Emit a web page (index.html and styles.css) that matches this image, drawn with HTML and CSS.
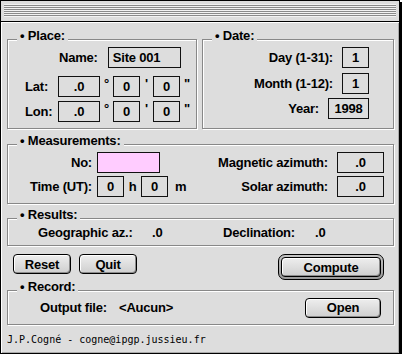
FILE: index.html
```html
<!DOCTYPE html>
<html lang="en">
<head>
  <meta charset="UTF-8">
  <title>Declination</title>
  <link rel="stylesheet" href="styles.css">
</head>
<body>
  <div class="window">
    <div class="titlebar"><div class="stripes"></div></div>

    <div class="content">
      <div class="top-row">
        <div class="group place">
          <span class="group-title">• Place:</span>
          <div class="name-row">
            <span>Name:</span>
            <span class="field name-field">Site 001</span>
          </div>
          <div class="coord-row lat">
            <span class="coord-label">Lat:</span>
            <span class="field deg">.0</span><span class="unit">°</span>
            <span class="field min">0</span><span class="unit">'</span>
            <span class="field sec">0</span><span class="unit last">"</span>
          </div>
          <div class="coord-row">
            <span class="coord-label">Lon:</span>
            <span class="field deg">.0</span><span class="unit">°</span>
            <span class="field min">0</span><span class="unit">'</span>
            <span class="field sec">0</span><span class="unit last">"</span>
          </div>
        </div>

        <div class="group date">
          <span class="group-title">• Date:</span>
          <div class="date-row day">
            <span>Day (1-31):</span>
            <span class="field small">1</span>
          </div>
          <div class="date-row">
            <span>Month (1-12):</span>
            <span class="field small">1</span>
          </div>
          <div class="date-row">
            <span>Year:</span>
            <span class="field year">1998</span>
          </div>
        </div>
      </div>

      <div class="group measurements">
        <span class="group-title">• Measurements:</span>
        <div class="meas-left">
          <span class="meas-label">No:</span>
          <span class="field pink"></span>
          <span class="meas-label">Time (UT):</span>
          <div class="time">
            <span class="field small">0</span><span class="unit-h">h</span>
            <span class="field small">0</span><span class="unit-m">m</span>
          </div>
        </div>
        <div class="meas-right">
          <span class="meas-label">Magnetic azimuth:</span>
          <span class="field azimuth">.0</span>
          <span class="meas-label">Solar azimuth:</span>
          <span class="field azimuth">.0</span>
        </div>
      </div>

      <div class="group results">
        <span class="group-title">• Results:</span>
        <span>Geographic az.:</span>
        <span>.0</span>
        <span>Declination:</span>
        <span>.0</span>
      </div>

      <div class="button-row">
        <button class="btn">Reset</button>
        <button class="btn quit">Quit</button>
        <div class="default-ring">
          <button class="btn compute">Compute</button>
        </div>
      </div>

      <div class="group record">
        <span class="group-title">• Record:</span>
        <span class="output-label">Output file:</span>
        <span>&lt;Aucun&gt;</span>
        <button class="btn open">Open</button>
      </div>

      <div class="footer">J.P.Cogné - cogne@ipgp.jussieu.fr</div>
    </div>
  </div>
</body>
</html>
```

FILE: styles.css
```css
:root {
  --bg: #dddddd;
  --etch-dark: #888888;
  --etch-light: #ffffff;
  --field-border: #111111;
  --pink: #ffccff;
}

body {
  margin: 0;
  background: #ffffff;
}

.window {
  width: 400px;
  height: 354px;
  box-sizing: border-box;
  border: 1px solid #000;
  box-shadow: 2px 2px 0 #000;
  background: var(--bg);
  display: flex;
  flex-direction: column;
  font-family: "Liberation Sans", Arial, sans-serif;
  font-weight: bold;
  font-size: 13px;
  line-height: 15px;
  letter-spacing: -0.2px;
  color: #000;
}

/* title bar */
.titlebar {
  height: 21px;
  box-sizing: border-box;
  border-bottom: 1px solid #000;
  padding: 3px 3px 0 3px;
  background: var(--bg);
}

.stripes {
  height: 13px;
  background: repeating-linear-gradient(to bottom, #f2f2f2 0 1px, #8a8a8a 1px 2px);
}

.content {
  flex: 1;
  display: flex;
  flex-direction: column;
  padding: 0 5px 0 6px;
  box-shadow: inset 1px 1px 0 #fff, inset -1px -1px 0 #aaa;
}

/* group boxes */
.group {
  position: relative;
  box-sizing: border-box;
  border: 1px solid var(--etch-dark);
  box-shadow: inset 1px 1px 0 var(--etch-light), 1px 1px 0 var(--etch-light);
}

.group-title {
  position: absolute;
  top: -12px;
  left: 9px;
  padding: 0 3px;
  background: var(--bg);
  white-space: nowrap;
}

.field {
  display: flex;
  align-items: center;
  justify-content: center;
  box-sizing: border-box;
  height: 21px;
  border: 1px solid var(--field-border);
}

/* place / date */
.top-row {
  display: flex;
  gap: 5px;
  margin-top: 17px;
  height: 90px;
}

.place {
  width: 190px;
  padding: 7px 0 0 17px;
}

.name-row {
  display: flex;
  align-items: center;
  gap: 10px;
  padding-left: 34px;
  margin-bottom: 8px;
}

.name-field {
  width: 73px;
  justify-content: flex-start;
  padding-left: 4px;
}

.coord-row {
  display: flex;
  align-items: center;
}

.coord-row.lat {
  margin-bottom: 4px;
}

.coord-label {
  width: 33px;
}

.deg {
  width: 42px;
}

.min,
.sec {
  width: 27px;
}

.unit {
  width: 13px;
  text-align: center;
  align-self: flex-start;
}

.unit.last {
  width: auto;
  margin-left: 4px;
}

.date {
  flex: 1;
  padding: 7px 24px 0 0;
  display: flex;
  flex-direction: column;
  align-items: flex-end;
  gap: 4px;
}

.date-row {
  display: flex;
  align-items: center;
  gap: 9px;
}

.date-row.day {
  margin-bottom: 1px;
}

.small {
  width: 27px;
}

.year {
  width: 41px;
}

/* measurements */
.measurements {
  height: 60px;
  margin-top: 15px;
  padding: 7px 9px 0 0;
  display: flex;
  justify-content: space-between;
  align-items: flex-start;
}

.meas-left,
.meas-right {
  display: grid;
  align-items: center;
  row-gap: 3px;
}

.meas-left {
  grid-template-columns: 84px auto;
  column-gap: 5px;
}

.meas-right {
  grid-template-columns: auto 47px;
  column-gap: 9px;
}

.meas-label {
  justify-self: end;
  white-space: nowrap;
}

.pink {
  width: 63px;
  background: var(--pink);
}

.time {
  display: flex;
  align-items: center;
}

.unit-h {
  width: 17px;
  text-align: center;
}

.unit-m {
  margin-left: 7px;
}

/* results */
.results {
  height: 28px;
  margin-top: 14px;
  padding-left: 30px;
  display: grid;
  grid-template-columns: 114px 71px 92px auto;
  align-items: center;
}

/* buttons */
.button-row {
  display: flex;
  align-items: flex-start;
  height: 26px;
  margin-top: 8px;
  padding: 0 10px 0 6px;
}

.btn {
  display: flex;
  align-items: center;
  justify-content: center;
  box-sizing: border-box;
  width: 58px;
  height: 20px;
  padding: 0;
  border: 1px solid #000;
  border-radius: 4px;
  background: linear-gradient(#eeeeee, #cfcfcf);
  box-shadow: inset 1px 1px 0 #fff, inset -1px -1px 0 #8c8c8c;
  font: inherit;
  letter-spacing: inherit;
  color: #000;
}

.quit {
  margin-left: 8px;
}

.default-ring {
  margin-left: auto;
  box-sizing: border-box;
  width: 106px;
  height: 26px;
  padding: 2px;
  border: 1px solid #000;
  border-radius: 7px;
  background: linear-gradient(#c4c4c4, #9a9a9a);
}

.compute {
  width: 100%;
  height: 100%;
}

/* record */
.record {
  height: 35px;
  margin-top: 10px;
  padding: 0 12px 0 32px;
  display: flex;
  align-items: center;
}

.output-label {
  width: 79px;
}

.open {
  width: 76px;
  margin-left: auto;
}

.footer {
  flex: 1;
  display: flex;
  align-items: center;
  font-family: "DejaVu Sans Mono", "Liberation Mono", monospace;
  font-weight: normal;
  font-size: 10px;
  letter-spacing: 0;
}
```
